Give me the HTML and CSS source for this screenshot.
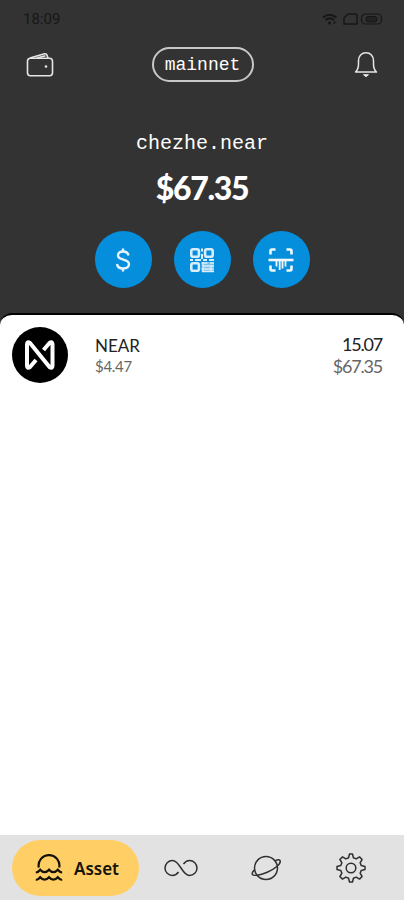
FILE: index.html
```
<!DOCTYPE html>
<html lang="en">
<head>
    <meta charset="UTF-8">
    <meta name="viewport" content="width=device-width, initial-scale=1.0">
    <title>Wallet</title>
    <link rel="stylesheet" href="styles.css">
</head>
<body>
    <header class="header">
        <div class="status-bar">
            <span class="time">18:09</span>
            <svg class="status-icons" width="62" height="14" viewBox="0 0 62 14" fill="none" stroke="#171717" stroke-width="1.5">
                <path d="M1 5.5Q7.500 0 14.500 5.500M3.500 8Q8 4.500 12 8" stroke-width="2"/>
                <circle cx="7.500" cy="11" r="1.500" fill="#171717" stroke="none"/>
                <path d="M12.500 9v3"/>
                <path d="M22 12V6l4-4h7q2 0 2 2v8z"/>
                <rect x="39.500" y="2" width="20" height="10" rx="4" stroke-width="1.200"/>
                <rect x="44" y="4.500" width="11" height="5.500" rx="2" fill="#222" stroke-width="1"/>
            </svg>
        </div>

        <div class="toolbar">
            <svg width="28" height="28" viewBox="0 0 28 28" fill="none" stroke="#e6e6e6" stroke-width="1.600" stroke-linejoin="round">
                <rect x="1.500" y="7.300" width="25" height="17.400" rx="3"/>
                <path d="M4 7l14.500-4.200q2-.4 2.600 1.500L22 7M11 7l8.500-2.300"/>
                <circle cx="20" cy="15.500" r="1.300" fill="#e6e6e6" stroke="none"/>
            </svg>
            <div class="network">mainnet</div>
            <svg width="28" height="28" viewBox="0 0 28 28" fill="none" stroke="#e6e6e6" stroke-width="1.500" stroke-linejoin="round">
                <path d="M4.500 21q3-2.500 3-8V9.500C7.500 5 10.500 1.700 15 1.700s7.500 3.300 7.500 7.800V13q0 5.500 3 8z"/>
                <path d="M12.500 23.700h5L15 25.700z" fill="#e6e6e6" stroke-width="1"/>
            </svg>
        </div>

        <div class="account">chezhe.near</div>
        <div class="balance">$67.35</div>

        <div class="actions">
            <div class="action">
                <svg width="24" height="28" viewBox="0 0 24 28" fill="none" stroke="#e8f4fc" stroke-width="2.400">
                    <path d="M17.500 9.500C17 6.800 15 5.500 12 5.500s-5 1.500-5 4c0 5.500 11 2.800 11 8.500 0 2.800-2.500 4.500-6 4.500-3.300 0-5.500-1.500-6-4.500M12 2.500v3M12 22.500v3"/>
                </svg>
            </div>
            <div class="action">
                <svg width="26" height="26" viewBox="0 0 26 26" fill="none" stroke="#d9ecfa" stroke-width="2.600">
                    <rect x="2.300" y="2.300" width="7.600" height="7.400" rx="1.800"/>
                    <rect x="16.100" y="2.300" width="7.600" height="7.400" rx="1.800"/>
                    <rect x="2.300" y="16.300" width="7.600" height="7.400" rx="1.800"/>
                    <path d="M13 1.500v3M13 7v5M1 13h3M6 13h6M14 13h4M20 13h5" stroke-width="2"/>
                    <rect x="12.500" y="15" width="12.500" height="10" fill="#d9ecfa" fill-opacity=".55" stroke="none"/>
                    <path d="M12.500 16h6M21 16h4M14 19h11M12.500 22h12M13 24.500h12M14 15v10M22 18v7" stroke-width="1.300"/>
                </svg>
            </div>
            <div class="action">
                <svg width="26" height="26" viewBox="0 0 26 26" fill="none" stroke="#f2f9fe" stroke-width="2.600">
                    <path d="M2.500 7.500V4q0-1.500 1.500-1.500h3.500M18.500 2.500H22Q23.500 2.500 23.500 4v3.500M2.500 18.500V22q0 1.500 1.500 1.500h3.500M18.500 23.500H22Q23.500 23.500 23.500 22v-3.500"/>
                    <path d="M.5 13h25"/>
                    <path d="M8.500 14v5.500M11.700 14v9M14.500 14v7.500M17.500 14v5.500" stroke-width="1.800"/>
                </svg>
            </div>
        </div>
    </header>

    <main class="sheet">
        <div class="token">
            <svg class="token-logo" width="56" height="56" viewBox="0 0 56 56">
                <circle cx="28" cy="28" r="28"/>
                <path d="M31.500 23l6-7q3-2 3 1.300v21.400q0 3.300-3 1.300L18 16Q15 14 15 17.300v21.400q0 3.300 3 1.300l6-7" fill="none" stroke="#fff" stroke-width="4" stroke-linejoin="round"/>
            </svg>
            <div class="token-info">
                <div class="token-name">NEAR</div>
                <div class="token-price">$4.47</div>
            </div>
            <div class="token-amount">
                <div class="token-count">15.07</div>
                <div class="token-value">$67.35</div>
            </div>
        </div>
    </main>

    <nav class="tabs">
        <div class="tab tab-active">
            <svg width="28" height="28" viewBox="0 0 28 28" fill="none" stroke="#15120a" stroke-width="2.200">
                <path d="M3.800 13.500A10.400 10.400 0 1 1 24.200 13.500"/>
                <path d="M.8 18.500q2.200 0 4.400-2.800 4.400 5 8.800 0 4.400 5 8.800 0 2.200 2.800 4.400 2.800M.8 26q2.200 0 4.400-2.800 4.400 5 8.800 0 4.400 5 8.800 0 2.200 2.800 4.400 2.800"/>
            </svg>
            <span class="tab-label">Asset</span>
        </div>
        <div class="tab">
            <svg width="34" height="18" viewBox="0 0 34 18" fill="none" stroke="#303030" stroke-width="1.500">
                <path d="M14.500 13Q12 16.500 8.500 16.500a7.500 7.500 0 1 1 0-15c7.500 0 9.500 15 17 15a7.500 7.500 0 1 0 0-15Q22 1.500 19.500 5"/>
            </svg>
        </div>
        <div class="tab">
            <svg width="32" height="28" viewBox="0 0 32 28" fill="none" stroke="#303030" stroke-width="1.500">
                <circle cx="16" cy="14" r="11.500"/>
                <path d="M25 6.800c3-1.600 4.800-1.500 5.200.2.600 3-5.200 8-13 11.200-7.500 3-14 4.300-14.900 2-.6-1.500.6-3.200 2.700-4.900"/>
            </svg>
        </div>
        <div class="tab">
            <svg width="32" height="32" viewBox="0 0 32 32" fill="none" stroke="#303030" stroke-width="1.500" stroke-linejoin="round">
                <circle cx="16" cy="16" r="4.800"/>
                <path d="M14.500 2h3l.9 3.700 2.800 1.200 3.300-2 2.600 2.600-2 3.300 1.200 2.800 3.700.9v3l-3.700.9-1.200 2.800 2 3.300-2.600 2.600-3.300-2-2.800 1.200-.9 3.700h-3l-.9-3.700-2.800-1.200-3.300 2-2.600-2.600 2-3.300-1.200-2.800-3.700-.9v-3l3.700-.9 1.200-2.800-2-3.300 2.600-2.600 3.300 2 2.800-1.200z"/>
            </svg>
        </div>
    </nav>
</body>
</html>
```
FILE: styles.css
```
* {
    box-sizing: border-box;
}

body {
    margin: 0;
    height: 100vh;
    display: flex;
    flex-direction: column;
    background: #333;
    font-family: Lato, sans-serif;
    color: #222;
}

svg {
    display: block;
    flex-shrink: 0;
}

.header {
    height: 313px;
    color: #fff;
}

.status-bar {
    display: flex;
    justify-content: space-between;
    align-items: center;
    height: 37px;
    padding: 0 20px 0 23px;
}

.time {
    font-family: Roboto, sans-serif;
    font-size: 15px;
    color: #171717;
}

.toolbar {
    display: flex;
    justify-content: space-between;
    align-items: center;
    height: 55px;
    padding: 0 25px 0 26px;
}

.network {
    width: 102px;
    height: 35px;
    border: 2px solid #c8c8c8;
    border-radius: 18px;
    font: 18px/32px "Liberation Mono", monospace;
    text-align: center;
}

.account {
    margin-top: 40px;
    font: 20px/24px "Liberation Mono", monospace;
    text-align: center;
}

.balance {
    margin-top: 12px;
    font-size: 32px;
    line-height: 40px;
    font-weight: 900;
    letter-spacing: -1.3px;
    text-align: center;
}

.actions {
    display: flex;
    justify-content: center;
    gap: 22px;
    margin-top: 23px;
}

.action {
    display: flex;
    align-items: center;
    justify-content: center;
    width: 57px;
    height: 57px;
    border-radius: 50%;
    background: #058edb;
}

.sheet {
    flex: 1;
    border-top: 2px solid #000;
    border-radius: 12px 12px 0 0;
    background: #fff;
}

.token {
    display: flex;
    align-items: center;
    padding: 12px 22px 0 12px;
}

.token-info {
    flex: 1;
    margin-left: 27px;
    padding-top: 2px;
    line-height: 21px;
}

.token-name {
    font-size: 17px;
}

.token-price {
    font-size: 15px;
    letter-spacing: -0.3px;
    color: #666;
}

.token-amount {
    font-size: 18px;
    line-height: 22px;
    letter-spacing: -1.2px;
    text-align: right;
}

.token-value {
    color: #666;
}

.tabs {
    display: flex;
    align-items: center;
    height: 65px;
    padding: 0 11px 0 12px;
    background: #e2e2e2;
}

.tab {
    flex: 1;
    display: flex;
    align-items: center;
    justify-content: center;
}

.tab-active {
    flex: 0 0 127px;
    gap: 11px;
    height: 56px;
    padding-left: 3px;
    border-radius: 28px;
    background: #ffcf66;
}

.tab-label {
    padding-top: 2px;
    font: 600 17px "Noto Sans", sans-serif;
    color: #15120a;
}
```
